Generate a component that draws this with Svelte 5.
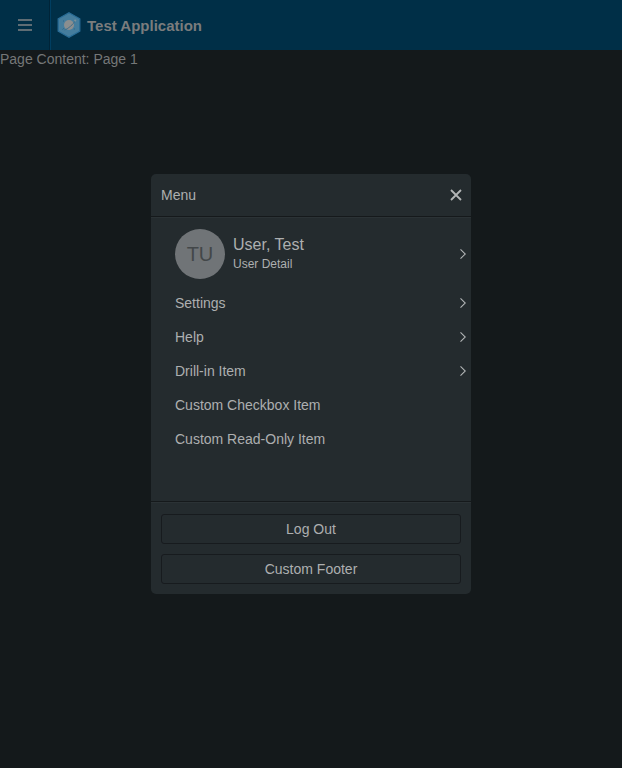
<script>
  const items = [
    { label: 'Settings', more: true },
    { label: 'Help', more: true },
    { label: 'Drill-in Item', more: true },
    { label: 'Custom Checkbox Item', more: false },
    { label: 'Custom Read-Only Item', more: false }
  ];
  const actions = ['Log Out', 'Custom Footer'];
</script>

{#snippet chevron()}
  <svg class="chevron" width="6" height="10" viewBox="0 0 6 10" aria-hidden="true">
    <path d="M.5.4 5.3 5 .5 9.6" fill="none" stroke="#b2b5b6" stroke-width="1.1" />
  </svg>
{/snippet}

<div class="app">
  <header>
    <button class="toggle" aria-label="Navigation">
      <svg width="14" height="12" viewBox="0 0 14 12">
        <path d="M0 1h14M0 6h14M0 11h14" stroke="#7f8284" stroke-width="1.7" />
      </svg>
    </button>
    <svg class="logo" width="24" height="26" viewBox="0 0 24 26" aria-hidden="true">
      <path d="M12 .8 22.8 6.8v12.4L12 25.2 1.2 19.2V6.8z" fill="#457d9d" stroke="#286c96" stroke-width="1.3" />
      <circle cx="12" cy="13" r="5" fill="#8b8e8f" />
      <path d="M7.4 18C10.5 17.2 17 12 17.9 8.8" fill="none" stroke="#3c6b87" stroke-width=".9" />
      <circle cx="18.2" cy="8.6" r="1.1" fill="#78909b" />
      <path d="m5.6 17.5 1.3-1.3M16.8 17h1M6 9h1" stroke="#2d6485" />
    </svg>
    <span class="title">Test Application</span>
  </header>
  <main>Page Content: Page 1</main>

  <div class="overlay">
    <section class="menu">
      <div class="menu-header">
        <span>Menu</span>
        <button class="close" aria-label="Close">
          <svg width="12" height="12" viewBox="0 0 12 12">
            <path d="m1 1 10 10M11 1 1 11" stroke="#b2b5b6" stroke-width="1.8" />
          </svg>
        </button>
      </div>
      <div class="content">
        <div class="user">
          <div class="avatar">TU</div>
          <div class="info">
            <div class="name">User, Test</div>
            <div class="detail">User Detail</div>
          </div>
          {@render chevron()}
        </div>
        {#each items as item}
          <div class="item">
            <span>{item.label}</span>
            {#if item.more}{@render chevron()}{/if}
          </div>
        {/each}
      </div>
      <footer>
        {#each actions as action}
          <button>{action}</button>
        {/each}
      </footer>
    </section>
  </div>
</div>

<style>
  .app {
    position: relative;
    height: 768px;
    overflow: hidden;
    background: #14191b;
    color: #757778;
    font: 14px/18px "Liberation Sans", Arial, sans-serif;
  }
  button { font: inherit; color: inherit; padding: 0; background: none; border: 0; }
  header { display: flex; align-items: center; height: 50px; background: #002f47; }
  .toggle {
    display: flex;
    align-items: center;
    justify-content: center;
    box-sizing: border-box;
    width: 51px;
    height: 50px;
    border-right: 1px solid #003e61;
    box-shadow: inset -1px 0 #002438;
  }
  .logo { margin-left: 6px; }
  .title { margin-left: 6px; padding-top: 2px; color: #7a7c7d; font-size: 15px; font-weight: bold; }
  .overlay {
    position: absolute;
    inset: 0;
    display: flex;
    align-items: center;
    justify-content: center;
  }
  .menu {
    display: flex;
    flex-direction: column;
    width: 320px;
    height: 420px;
    overflow: hidden;
    border-radius: 5px;
    background: #242b2e;
    color: #adafb0;
  }
  .menu-header {
    display: flex;
    align-items: center;
    justify-content: space-between;
    box-sizing: border-box;
    height: 43px;
    padding: 0 9px 0 10px;
    border-bottom: 1px solid #15191b;
  }
  .close { display: flex; }
  .content { flex: 1; border-top: 1px solid #2b3235; padding-top: 6px; }
  .user { display: flex; align-items: center; height: 60px; padding: 0 5px 0 24px; }
  .avatar {
    width: 50px;
    height: 50px;
    border-radius: 50%;
    background: #707477;
    color: #434749;
    font-size: 20px;
    line-height: 50px;
    text-align: center;
  }
  .info { flex: 1; margin-left: 8px; }
  .name { font-size: 16px; line-height: 20px; }
  .detail { font-size: 12px; line-height: 18px; }
  .item {
    display: flex;
    align-items: center;
    justify-content: space-between;
    height: 34px;
    padding: 0 5px 0 24px;
  }
  .item:nth-child(2) { margin-top: 2px; }
  .chevron { flex: none; }
  footer {
    display: flex;
    flex-direction: column;
    gap: 10px;
    padding: 12px 10px 10px;
    border-top: 1px solid #15191b;
    box-shadow: inset 0 1px #2b3235;
  }
  footer button { height: 30px; border: 1px solid #171b1e; border-radius: 3px; }
</style>
